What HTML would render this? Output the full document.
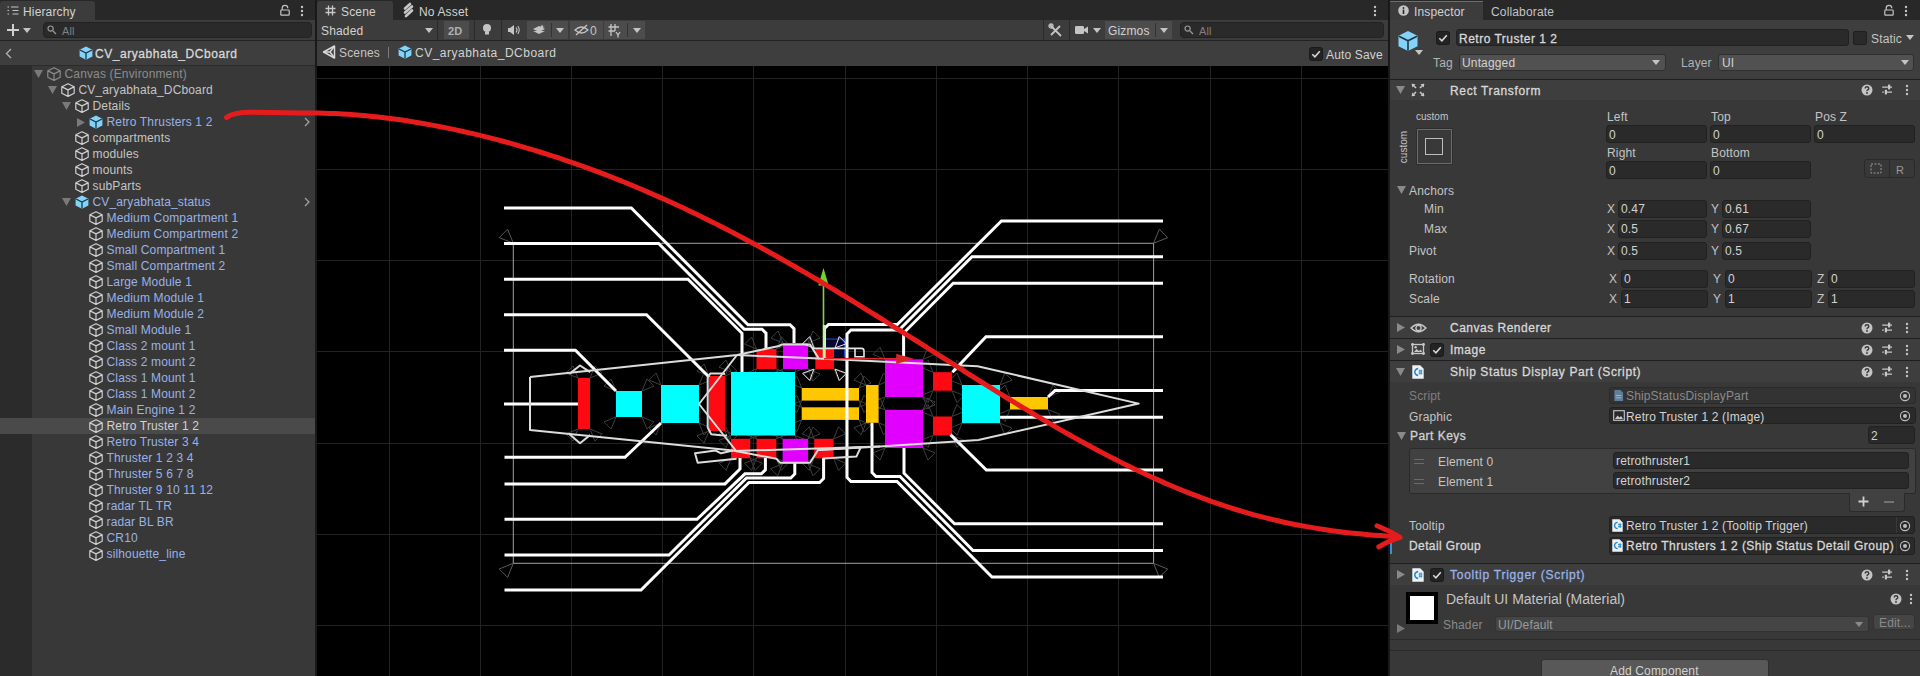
<!DOCTYPE html>
<html><head><meta charset="utf-8">
<style>
*{margin:0;padding:0;box-sizing:border-box}
html,body{width:1920px;height:676px;overflow:hidden;background:#191919;font-family:"Liberation Sans",sans-serif;font-size:12px;color:#d2d2d2}
.a{position:absolute;overflow:visible}
.t{position:absolute;white-space:pre;line-height:16px}
</style></head><body>
<svg width="0" height="0" style="position:absolute">
<defs>
<symbol id="cb" viewBox="0 0 14 14"><path d="M7 0.7 L13.2 3.8 V10.3 L7 13.4 L0.8 10.3 V3.8 Z M1 3.9 L7 6.9 L13 3.9 M7 6.9 V13.2" fill="none" stroke="#cfcfcf" stroke-width="1.2" stroke-linejoin="round"/></symbol>
<symbol id="cbb" viewBox="0 0 14 14"><path d="M7 0.6 L13.4 3.8 V10.6 L7 13.8 L0.6 10.6 V3.8 Z" fill="#83d2f7"/><path d="M1 4 L7 7 L13 4 M7 7 V13.6" stroke="#1d3644" stroke-width="1.3" fill="none"/></symbol>
<symbol id="kebab" viewBox="0 0 4 12"><circle cx="2" cy="2" r="1.2" fill="#c4c4c4"/><circle cx="2" cy="6" r="1.2" fill="#c4c4c4"/><circle cx="2" cy="10" r="1.2" fill="#c4c4c4"/></symbol>
<symbol id="help" viewBox="0 0 12 12"><circle cx="6" cy="6" r="5.5" fill="#c4c4c4"/><path d="M4.2 4.6 Q4.2 2.8 6 2.8 Q7.8 2.8 7.8 4.4 Q7.8 5.4 6.6 5.9 Q6 6.2 6 7.2" stroke="#383838" stroke-width="1.4" fill="none"/><circle cx="6" cy="9" r="0.9" fill="#383838"/></symbol>
<symbol id="sliders" viewBox="0 0 12 12"><path d="M1.2 3.2H11M1.2 8.2H2.8M5 8.2H11" stroke="#c8c8c8" stroke-width="1.3"/><rect x="7" y="0.6" width="2.2" height="4.8" fill="#c8c8c8"/><rect x="3.8" y="5.8" width="2.2" height="4.6" fill="#c8c8c8"/></symbol>
<symbol id="cs" viewBox="0 0 12 14"><path d="M0.3 0.3 H8.2 L11.7 3.8 V13.7 H0.3 Z" fill="#eef2f5"/><path d="M6.2 3.6 A3.4 3.4 0 1 0 6.2 10.4" stroke="#2a8bd0" stroke-width="1.6" fill="none"/><path d="M6.6 6H10.4M6.6 8.2H10.4M7.8 4.6V9.6M9.3 4.6V9.6" stroke="#2a8bd0" stroke-width="0.9"/></symbol>
<symbol id="target" viewBox="0 0 12 12"><circle cx="6" cy="6" r="4.6" fill="none" stroke="#bdbdbd" stroke-width="1.1"/><circle cx="6" cy="6" r="2" fill="#bdbdbd"/></symbol>
<symbol id="chk" viewBox="0 0 14 14"><rect x="0.5" y="0.5" width="13" height="13" rx="2" fill="#232323" stroke="#1a1a1a"/><path d="M3.3 7.2 L5.9 9.8 L10.8 4.2" stroke="#d8d8d8" stroke-width="1.6" fill="none"/></symbol>
<symbol id="scr" viewBox="0 0 12 14"><path d="M1.5 1 H8 L11 4 V13 H1.5 Z" fill="#5d7f99"/><path d="M3 7 H9 M3 9.5 H9" stroke="#9bc" stroke-width="1"/></symbol>
</defs></svg>
<div class="a" style="left:0px;top:0px;width:315px;height:676px;background:#383838;"></div>
<div class="a" style="left:0px;top:0px;width:315px;height:20px;background:#282828;"></div>
<div class="a" style="left:0px;top:1px;width:95px;height:19px;background:#3c3c3c;border-radius:3px 3px 0 0"></div>
<div class="a" style="left:0px;top:20px;width:315px;height:20px;background:#3c3c3c;"></div>
<div class="a" style="left:0px;top:40px;width:315px;height:1px;background:#232323;"></div>
<div class="a" style="left:0px;top:41px;width:315px;height:24px;background:#3e3e3e;"></div>
<div class="a" style="left:0px;top:65px;width:315px;height:1px;background:#2b2b2b;"></div>
<div class="a" style="left:0px;top:66px;width:32px;height:610px;background:#2b2b2b;"></div>
<div class="a" style="left:317px;top:0px;width:1071px;height:20px;background:#282828;"></div>
<div class="a" style="left:317px;top:1px;width:76px;height:19px;background:#3c3c3c;border-radius:3px 3px 0 0"></div>
<div class="a" style="left:317px;top:20px;width:1071px;height:20px;background:#3c3c3c;"></div>
<div class="a" style="left:317px;top:40px;width:1071px;height:1px;background:#232323;"></div>
<div class="a" style="left:317px;top:41px;width:1071px;height:25px;background:#3e3e3e;"></div>
<div class="a" style="left:317px;top:66px;width:1071px;height:610px;background:#000;"></div>
<div class="a" style="left:1390px;top:0px;width:530px;height:676px;background:#383838;"></div>
<div class="a" style="left:1390px;top:0px;width:530px;height:20px;background:#282828;"></div>
<div class="a" style="left:1390px;top:1px;width:93px;height:19px;background:#3c3c3c;border-radius:3px 3px 0 0"></div>
<div class="a" style="left:1390px;top:1px;width:93px;height:1px;background:#3a79bb;"></div>
<div class="a" style="left:1390px;top:20px;width:530px;height:59px;background:#3e3e3e;"></div>
<svg class="a" style="left:7px;top:6px;" width="12" height="10" viewBox="0 0 12 10"><path d="M0.5 1H2M0.5 4.5H2M0.5 8H2" stroke="#c4c4c4" stroke-width="1.2"/><path d="M4 1H11.5M5.5 4.5H11.5M5.5 8H11.5" stroke="#c4c4c4" stroke-width="1.2"/></svg>
<div class="t" style="left:23px;top:3.8px;color:#d2d2d2;font-size:12px;font-weight:400;letter-spacing:0.15px;">Hierarchy</div>
<svg class="a" style="left:280px;top:5px;" width="10" height="11" viewBox="0 0 10 11"><path d="M2.2 5 V3.2 A2.8 2.8 0 0 1 7.8 3.2" stroke="#c4c4c4" stroke-width="1.2" fill="none"/><rect x="0.8" y="5" width="8.4" height="5.2" rx="0.8" fill="none" stroke="#c4c4c4" stroke-width="1.2"/></svg>
<svg class="a" style="left:300px;top:5px" width="4" height="12"><use href="#kebab"/></svg>
<svg class="a" style="left:6px;top:23px;" width="14" height="14" viewBox="0 0 14 14"><path d="M7 1V13M1 7H13" stroke="#d0d0d0" stroke-width="2"/></svg>
<svg class="a" style="left:23px;top:28px;" width="8" height="5" viewBox="0 0 8 5"><path d="M0 0H8L4 5Z" fill="#c4c4c4"/></svg>
<div class="a" style="left:43px;top:22px;width:269px;height:16px;background:#2a2a2a;border:1px solid #222;border-radius:4px"></div>
<svg class="a" style="left:47px;top:25px;" width="11" height="10" viewBox="0 0 11 10"><circle cx="3.6" cy="3.6" r="2.6" fill="none" stroke="#9a9a9a" stroke-width="1.2"/><path d="M5.4 5.4L9 9" stroke="#9a9a9a" stroke-width="1.3"/></svg>
<div class="t" style="left:62px;top:22.8px;color:#808080;font-size:11px;font-weight:400;letter-spacing:0.15px;">All</div>
<svg class="a" style="left:5px;top:48px;" width="7" height="11" viewBox="0 0 7 11"><path d="M6 1L1.5 5.5L6 10" stroke="#b0b0b0" stroke-width="1.4" fill="none"/></svg>
<svg class="a" style="left:79px;top:46px" width="14" height="14"><use href="#cbb"/></svg>
<div class="t" style="left:95px;top:45.8px;color:#d8d8d8;font-size:12px;font-weight:400;letter-spacing:0.55px;-webkit-text-stroke:0.3px #d8d8d8;">CV_aryabhata_DCboard</div>
<svg class="a" style="left:34px;top:70px;" width="9" height="8" viewBox="0 0 9 8"><path d="M0 0H9L4.5 8Z" fill="#7a7a7a"/></svg>
<svg class="a" style="left:47px;top:67px;" width="14" height="14" viewBox="0 0 14 14"><path d="M7 0.7 L13.2 3.8 V10.3 L7 13.4 L0.8 10.3 V3.8 Z M1 3.9 L7 6.9 L13 3.9 M7 6.9 V13.2" fill="none" stroke="#8a8a8a" stroke-width="1.2" stroke-linejoin="round"/></svg>
<div class="t" style="left:64.5px;top:66.0px;color:#8c8c8c;font-size:12px;font-weight:400;letter-spacing:0.15px;">Canvas (Environment)</div>
<svg class="a" style="left:48px;top:86px;" width="9" height="8" viewBox="0 0 9 8"><path d="M0 0H9L4.5 8Z" fill="#7a7a7a"/></svg>
<svg class="a" style="left:61px;top:83px" width="14" height="14"><use href="#cb"/></svg>
<div class="t" style="left:78.5px;top:82.0px;color:#c4c4c4;font-size:12px;font-weight:400;letter-spacing:0.15px;">CV_aryabhata_DCboard</div>
<svg class="a" style="left:62px;top:102px;" width="9" height="8" viewBox="0 0 9 8"><path d="M0 0H9L4.5 8Z" fill="#7a7a7a"/></svg>
<svg class="a" style="left:75px;top:99px" width="14" height="14"><use href="#cb"/></svg>
<div class="t" style="left:92.5px;top:98.0px;color:#c4c4c4;font-size:12px;font-weight:400;letter-spacing:0.15px;">Details</div>
<svg class="a" style="left:77px;top:117.5px;" width="8" height="9" viewBox="0 0 8 9"><path d="M0 0V9L8 4.5Z" fill="#7a7a7a"/></svg>
<svg class="a" style="left:89px;top:115px" width="14" height="14"><use href="#cbb"/></svg>
<div class="t" style="left:106.5px;top:114.0px;color:#98b2e8;font-size:12px;font-weight:400;letter-spacing:0.15px;">Retro Thrusters 1 2</div>
<svg class="a" style="left:304px;top:117px;" width="6" height="10" viewBox="0 0 6 10"><path d="M1 1L5 5L1 9" stroke="#a0a0a0" stroke-width="1.3" fill="none"/></svg>
<svg class="a" style="left:75px;top:131px" width="14" height="14"><use href="#cb"/></svg>
<div class="t" style="left:92.5px;top:130.0px;color:#c4c4c4;font-size:12px;font-weight:400;letter-spacing:0.15px;">compartments</div>
<svg class="a" style="left:75px;top:147px" width="14" height="14"><use href="#cb"/></svg>
<div class="t" style="left:92.5px;top:146.0px;color:#c4c4c4;font-size:12px;font-weight:400;letter-spacing:0.15px;">modules</div>
<svg class="a" style="left:75px;top:163px" width="14" height="14"><use href="#cb"/></svg>
<div class="t" style="left:92.5px;top:162.0px;color:#c4c4c4;font-size:12px;font-weight:400;letter-spacing:0.15px;">mounts</div>
<svg class="a" style="left:75px;top:179px" width="14" height="14"><use href="#cb"/></svg>
<div class="t" style="left:92.5px;top:178.0px;color:#c4c4c4;font-size:12px;font-weight:400;letter-spacing:0.15px;">subParts</div>
<svg class="a" style="left:62px;top:198px;" width="9" height="8" viewBox="0 0 9 8"><path d="M0 0H9L4.5 8Z" fill="#7a7a7a"/></svg>
<svg class="a" style="left:75px;top:195px" width="14" height="14"><use href="#cbb"/></svg>
<div class="t" style="left:92.5px;top:194.0px;color:#98b2e8;font-size:12px;font-weight:400;letter-spacing:0.15px;">CV_aryabhata_status</div>
<svg class="a" style="left:304px;top:197px;" width="6" height="10" viewBox="0 0 6 10"><path d="M1 1L5 5L1 9" stroke="#a0a0a0" stroke-width="1.3" fill="none"/></svg>
<svg class="a" style="left:89px;top:211px" width="14" height="14"><use href="#cb"/></svg>
<div class="t" style="left:106.5px;top:210.0px;color:#98b2e8;font-size:12px;font-weight:400;letter-spacing:0.15px;">Medium Compartment 1</div>
<svg class="a" style="left:89px;top:227px" width="14" height="14"><use href="#cb"/></svg>
<div class="t" style="left:106.5px;top:226.0px;color:#98b2e8;font-size:12px;font-weight:400;letter-spacing:0.15px;">Medium Compartment 2</div>
<svg class="a" style="left:89px;top:243px" width="14" height="14"><use href="#cb"/></svg>
<div class="t" style="left:106.5px;top:242.0px;color:#98b2e8;font-size:12px;font-weight:400;letter-spacing:0.15px;">Small Compartment 1</div>
<svg class="a" style="left:89px;top:259px" width="14" height="14"><use href="#cb"/></svg>
<div class="t" style="left:106.5px;top:258.0px;color:#98b2e8;font-size:12px;font-weight:400;letter-spacing:0.15px;">Small Compartment 2</div>
<svg class="a" style="left:89px;top:275px" width="14" height="14"><use href="#cb"/></svg>
<div class="t" style="left:106.5px;top:274.0px;color:#98b2e8;font-size:12px;font-weight:400;letter-spacing:0.15px;">Large Module 1</div>
<svg class="a" style="left:89px;top:291px" width="14" height="14"><use href="#cb"/></svg>
<div class="t" style="left:106.5px;top:290.0px;color:#98b2e8;font-size:12px;font-weight:400;letter-spacing:0.15px;">Medium Module 1</div>
<svg class="a" style="left:89px;top:307px" width="14" height="14"><use href="#cb"/></svg>
<div class="t" style="left:106.5px;top:306.0px;color:#98b2e8;font-size:12px;font-weight:400;letter-spacing:0.15px;">Medium Module 2</div>
<svg class="a" style="left:89px;top:323px" width="14" height="14"><use href="#cb"/></svg>
<div class="t" style="left:106.5px;top:322.0px;color:#98b2e8;font-size:12px;font-weight:400;letter-spacing:0.15px;">Small Module 1</div>
<svg class="a" style="left:89px;top:339px" width="14" height="14"><use href="#cb"/></svg>
<div class="t" style="left:106.5px;top:338.0px;color:#98b2e8;font-size:12px;font-weight:400;letter-spacing:0.15px;">Class 2 mount 1</div>
<svg class="a" style="left:89px;top:355px" width="14" height="14"><use href="#cb"/></svg>
<div class="t" style="left:106.5px;top:354.0px;color:#98b2e8;font-size:12px;font-weight:400;letter-spacing:0.15px;">Class 2 mount 2</div>
<svg class="a" style="left:89px;top:371px" width="14" height="14"><use href="#cb"/></svg>
<div class="t" style="left:106.5px;top:370.0px;color:#98b2e8;font-size:12px;font-weight:400;letter-spacing:0.15px;">Class 1 Mount 1</div>
<svg class="a" style="left:89px;top:387px" width="14" height="14"><use href="#cb"/></svg>
<div class="t" style="left:106.5px;top:386.0px;color:#98b2e8;font-size:12px;font-weight:400;letter-spacing:0.15px;">Class 1 Mount 2</div>
<svg class="a" style="left:89px;top:403px" width="14" height="14"><use href="#cb"/></svg>
<div class="t" style="left:106.5px;top:402.0px;color:#98b2e8;font-size:12px;font-weight:400;letter-spacing:0.15px;">Main Engine 1 2</div>
<div class="a" style="left:0px;top:418px;width:315px;height:16px;background:#4a4a4a;"></div>
<svg class="a" style="left:89px;top:419px" width="14" height="14"><use href="#cb"/></svg>
<div class="t" style="left:106.5px;top:418.0px;color:#d2d2d2;font-size:12px;font-weight:400;letter-spacing:0.15px;">Retro Truster 1 2</div>
<svg class="a" style="left:89px;top:435px" width="14" height="14"><use href="#cb"/></svg>
<div class="t" style="left:106.5px;top:434.0px;color:#98b2e8;font-size:12px;font-weight:400;letter-spacing:0.15px;">Retro Truster 3 4</div>
<svg class="a" style="left:89px;top:451px" width="14" height="14"><use href="#cb"/></svg>
<div class="t" style="left:106.5px;top:450.0px;color:#98b2e8;font-size:12px;font-weight:400;letter-spacing:0.15px;">Thruster 1 2 3 4</div>
<svg class="a" style="left:89px;top:467px" width="14" height="14"><use href="#cb"/></svg>
<div class="t" style="left:106.5px;top:466.0px;color:#98b2e8;font-size:12px;font-weight:400;letter-spacing:0.15px;">Thruster 5 6 7 8</div>
<svg class="a" style="left:89px;top:483px" width="14" height="14"><use href="#cb"/></svg>
<div class="t" style="left:106.5px;top:482.0px;color:#98b2e8;font-size:12px;font-weight:400;letter-spacing:0.15px;">Thruster 9 10 11 12</div>
<svg class="a" style="left:89px;top:499px" width="14" height="14"><use href="#cb"/></svg>
<div class="t" style="left:106.5px;top:498.0px;color:#98b2e8;font-size:12px;font-weight:400;letter-spacing:0.15px;">radar TL TR</div>
<svg class="a" style="left:89px;top:515px" width="14" height="14"><use href="#cb"/></svg>
<div class="t" style="left:106.5px;top:514.0px;color:#98b2e8;font-size:12px;font-weight:400;letter-spacing:0.15px;">radar BL BR</div>
<svg class="a" style="left:89px;top:531px" width="14" height="14"><use href="#cb"/></svg>
<div class="t" style="left:106.5px;top:530.0px;color:#98b2e8;font-size:12px;font-weight:400;letter-spacing:0.15px;">CR10</div>
<svg class="a" style="left:89px;top:547px" width="14" height="14"><use href="#cb"/></svg>
<div class="t" style="left:106.5px;top:546.0px;color:#98b2e8;font-size:12px;font-weight:400;letter-spacing:0.15px;">silhouette_line</div>
<svg class="a" style="left:0;top:0" width="1920" height="676" viewBox="0 0 1920 676"><defs><clipPath id="vp"><rect x="317" y="66" width="1071" height="610"/></clipPath></defs><g clip-path="url(#vp)"><rect x="389" y="66" width="1" height="610" fill="#222222"/><rect x="480" y="66" width="1" height="610" fill="#222222"/><rect x="571" y="66" width="1" height="610" fill="#222222"/><rect x="662" y="66" width="1" height="610" fill="#222222"/><rect x="753" y="66" width="1" height="610" fill="#222222"/><rect x="845" y="66" width="1" height="610" fill="#222222"/><rect x="936" y="66" width="1" height="610" fill="#222222"/><rect x="1027" y="66" width="1" height="610" fill="#222222"/><rect x="1118" y="66" width="1" height="610" fill="#222222"/><rect x="1210" y="66" width="1" height="610" fill="#222222"/><rect x="1301" y="66" width="1" height="610" fill="#222222"/><rect x="317" y="78" width="1071" height="1" fill="#222222"/><rect x="317" y="169" width="1071" height="1" fill="#222222"/><rect x="317" y="260" width="1071" height="1" fill="#222222"/><rect x="317" y="351" width="1071" height="1" fill="#222222"/><rect x="317" y="443" width="1071" height="1" fill="#222222"/><rect x="317" y="534" width="1071" height="1" fill="#222222"/><rect x="317" y="625" width="1071" height="1" fill="#222222"/><rect x="513.3" y="243.3" width="640.3" height="320" fill="none" stroke="#bdbdbd" stroke-width="1" opacity="0.85"/><path d="M513.3,243.3 L507.6,229.2 L499.2,237.6 Z M1153.6,243.3 L1167.7,237.6 L1159.3,229.2 Z M513.3,563.3 L499.2,569.0 L507.6,577.4 Z M1153.6,563.3 L1159.3,577.4 L1167.7,569.0 Z" fill="none" stroke="#5a5a5a" stroke-width="1"/><path d="M578.0,378.0 L573.1,366.0 L566.0,373.1 Z M590.0,378.0 L602.0,373.1 L594.9,366.0 Z M578.0,429.0 L566.0,433.9 L573.1,441.0 Z M590.0,429.0 L594.9,441.0 L602.0,433.9 Z M616.0,391.0 L611.1,379.0 L604.0,386.1 Z M642.0,391.0 L654.0,386.1 L646.9,379.0 Z M616.0,417.0 L604.0,421.9 L611.1,429.0 Z M642.0,417.0 L646.9,429.0 L654.0,421.9 Z M661.0,385.0 L656.1,373.0 L649.0,380.1 Z M699.0,385.0 L711.0,380.1 L703.9,373.0 Z M661.0,423.0 L649.0,427.9 L656.1,435.0 Z M699.0,423.0 L703.9,435.0 L711.0,427.9 Z M709.0,376.0 L704.1,364.0 L697.0,371.1 Z M725.0,376.0 L737.0,371.1 L729.9,364.0 Z M709.0,431.0 L697.0,435.9 L704.1,443.0 Z M725.0,431.0 L729.9,443.0 L737.0,435.9 Z M731.0,372.0 L726.1,360.0 L719.0,367.1 Z M795.0,372.0 L807.0,367.1 L799.9,360.0 Z M731.0,435.5 L719.0,440.4 L726.1,447.5 Z M795.0,435.5 L799.9,447.5 L807.0,440.4 Z M756.5,349.0 L751.6,337.0 L744.5,344.1 Z M776.5,349.0 L788.5,344.1 L781.4,337.0 Z M756.5,369.0 L744.5,373.9 L751.6,381.0 Z M776.5,369.0 L781.4,381.0 L788.5,373.9 Z M783.0,343.0 L778.1,331.0 L771.0,338.1 Z M808.0,343.0 L820.0,338.1 L812.9,331.0 Z M783.0,369.0 L771.0,373.9 L778.1,381.0 Z M808.0,369.0 L812.9,381.0 L820.0,373.9 Z M815.4,349.0 L810.5,337.0 L803.4,344.1 Z M834.0,349.0 L846.0,344.1 L838.9,337.0 Z M815.4,369.0 L803.4,373.9 L810.5,381.0 Z M834.0,369.0 L838.9,381.0 L846.0,373.9 Z M731.0,438.8 L726.1,426.8 L719.0,433.9 Z M750.2,438.8 L762.2,433.9 L755.1,426.8 Z M731.0,458.3 L719.0,463.2 L726.1,470.3 Z M750.2,458.3 L755.1,470.3 L762.2,463.2 Z M756.5,438.8 L751.6,426.8 L744.5,433.9 Z M776.3,438.8 L788.3,433.9 L781.2,426.8 Z M756.5,458.3 L744.5,463.2 L751.6,470.3 Z M776.3,458.3 L781.2,470.3 L788.3,463.2 Z M782.6,438.8 L777.7,426.8 L770.6,433.9 Z M808.1,438.8 L820.1,433.9 L813.0,426.8 Z M782.6,463.8 L770.6,468.7 L777.7,475.8 Z M808.1,463.8 L813.0,475.8 L820.1,468.7 Z M814.2,438.8 L809.3,426.8 L802.2,433.9 Z M833.6,438.8 L845.6,433.9 L838.5,426.8 Z M814.2,458.3 L802.2,463.2 L809.3,470.3 Z M833.6,458.3 L838.5,470.3 L845.6,463.2 Z M801.7,388.0 L796.8,376.0 L789.7,383.1 Z M859.0,388.0 L871.0,383.1 L863.9,376.0 Z M801.7,400.6 L789.7,405.5 L796.8,412.6 Z M859.0,400.6 L863.9,412.6 L871.0,405.5 Z M801.7,407.3 L796.8,395.3 L789.7,402.4 Z M859.0,407.3 L871.0,402.4 L863.9,395.3 Z M801.7,419.9 L789.7,424.8 L796.8,431.9 Z M859.0,419.9 L863.9,431.9 L871.0,424.8 Z M866.0,385.0 L861.1,373.0 L854.0,380.1 Z M878.6,385.0 L890.6,380.1 L883.5,373.0 Z M866.0,422.8 L854.0,427.7 L861.1,434.8 Z M878.6,422.8 L883.5,434.8 L890.6,427.7 Z M885.0,359.3 L880.1,347.3 L873.0,354.4 Z M923.0,359.3 L935.0,354.4 L927.9,347.3 Z M885.0,397.0 L873.0,401.9 L880.1,409.0 Z M923.0,397.0 L927.9,409.0 L935.0,401.9 Z M885.0,409.9 L880.1,397.9 L873.0,405.0 Z M923.0,409.9 L935.0,405.0 L927.9,397.9 Z M885.0,448.0 L873.0,452.9 L880.1,460.0 Z M923.0,448.0 L927.9,460.0 L935.0,452.9 Z M933.0,372.2 L928.1,360.2 L921.0,367.3 Z M952.0,372.2 L964.0,367.3 L956.9,360.2 Z M933.0,390.7 L921.0,395.6 L928.1,402.7 Z M952.0,390.7 L956.9,402.7 L964.0,395.6 Z M933.0,416.5 L928.1,404.5 L921.0,411.6 Z M952.0,416.5 L964.0,411.6 L956.9,404.5 Z M933.0,435.4 L921.0,440.3 L928.1,447.4 Z M952.0,435.4 L956.9,447.4 L964.0,440.3 Z M962.0,385.0 L957.1,373.0 L950.0,380.1 Z M1000.0,385.0 L1012.0,380.1 L1004.9,373.0 Z M962.0,423.2 L950.0,428.1 L957.1,435.2 Z M1000.0,423.2 L1004.9,435.2 L1012.0,428.1 Z M1010.0,397.0 L1005.1,385.0 L998.0,392.1 Z M1048.0,397.0 L1060.0,392.1 L1052.9,385.0 Z M1010.0,409.5 L998.0,414.4 L1005.1,421.5 Z M1048.0,409.5 L1052.9,421.5 L1060.0,414.4 Z" fill="none" stroke="#3e3e3e" stroke-width="1"/><rect x="825.5" y="338.6" width="19.1" height="18.7" fill="#040430"/><path d="M825.5,339 H844.6 V357.3" fill="none" stroke="#2f48b8" stroke-width="1.2"/><rect x="578" y="378" width="12" height="51" fill="#ff0a12"/><rect x="616" y="391" width="26" height="26" fill="#00ffff"/><rect x="661" y="385" width="38" height="38" fill="#00ffff"/><rect x="709" y="376" width="16" height="55" fill="#ff0a12"/><rect x="731" y="372" width="64" height="63.5" fill="#00ffff"/><rect x="756.5" y="349" width="20" height="20" fill="#ff0a12"/><rect x="783" y="343" width="25" height="26" fill="#e100ff"/><rect x="815.4" y="349" width="18.6" height="20" fill="#ff0a12"/><rect x="731" y="438.8" width="19.2" height="19.5" fill="#ff0a12"/><rect x="756.5" y="438.8" width="19.8" height="19.5" fill="#ff0a12"/><rect x="782.6" y="438.8" width="25.5" height="25" fill="#e100ff"/><rect x="814.2" y="438.8" width="19.4" height="19.5" fill="#ff0a12"/><rect x="801.7" y="388" width="57.3" height="12.6" fill="#ffc700"/><rect x="801.7" y="407.3" width="57.3" height="12.6" fill="#ffc700"/><rect x="866" y="385" width="12.6" height="37.8" fill="#ffc700"/><rect x="885" y="359.3" width="38" height="37.7" fill="#e100ff"/><rect x="885" y="409.9" width="38" height="38.1" fill="#e100ff"/><rect x="933" y="372.2" width="19" height="18.5" fill="#ff0a12"/><rect x="933" y="416.5" width="19" height="18.9" fill="#ff0a12"/><rect x="962" y="385" width="38" height="38.2" fill="#00ffff"/><rect x="1010" y="397" width="38" height="12.5" fill="#ffc700"/><path d="M504,208 L631.3,208 L748,324.7 L790,324.7 L794,328.7 L794,343" fill="none" stroke="#fff" stroke-width="3" stroke-linejoin="miter" stroke-linecap="butt" /><path d="M504,243.5 L658.6,243.5 L744.3,329.2 L762,329.2 L766,333.2 L766,349" fill="none" stroke="#fff" stroke-width="3" stroke-linejoin="miter" stroke-linecap="butt" /><path d="M504,279.3 L688,279.3 L742,333.3 L742,372" fill="none" stroke="#fff" stroke-width="3" stroke-linejoin="miter" stroke-linecap="butt" /><path d="M504,314.7 L646.5,314.7 L709,377" fill="none" stroke="#fff" stroke-width="3" stroke-linejoin="miter" stroke-linecap="butt" /><path d="M504,350.3 L575.4,350.3 L616,391" fill="none" stroke="#fff" stroke-width="3" stroke-linejoin="miter" stroke-linecap="butt" /><path d="M504,404 L578,404" fill="none" stroke="#fff" stroke-width="3" stroke-linejoin="miter" stroke-linecap="butt" /><path d="M504.5,457.3 L625,457.3 L661,423" fill="none" stroke="#fff" stroke-width="3" stroke-linejoin="miter" stroke-linecap="butt" /><path d="M504.5,483.9 L725,483.9 L740,469 L740,458" fill="none" stroke="#fff" stroke-width="3" stroke-linejoin="miter" stroke-linecap="butt" /><path d="M504.5,519.3 L697,519.3 L745,473.8 L761.4,473.8 L765.4,469.8 L765.4,458" fill="none" stroke="#fff" stroke-width="3" stroke-linejoin="miter" stroke-linecap="butt" /><path d="M504.5,555 L669,555 L746.5,478 L790.8,478 L794.8,474 L794.8,463" fill="none" stroke="#fff" stroke-width="3" stroke-linejoin="miter" stroke-linecap="butt" /><path d="M504.5,590 L641,590 L749,482.5 L819.6,482.5 L823.6,478.5 L823.6,458" fill="none" stroke="#fff" stroke-width="3" stroke-linejoin="miter" stroke-linecap="butt" /><path d="M1163,221 L1001.4,221 L897.3,324.5 L828.5,324.5 L824.5,328.5 L824.5,349" fill="none" stroke="#fff" stroke-width="3" stroke-linejoin="miter" stroke-linecap="butt" /><path d="M1163,256.8 L972,256.8 L899,330 L851,330 L847,334 L847,477.5 L851,481.5 L897,481.5 L992,577 L1163,577" fill="none" stroke="#fff" stroke-width="3" stroke-linejoin="miter" stroke-linecap="butt" /><path d="M1163,283.2 L953.2,283.2 L903.6,333 L903.6,359.5" fill="none" stroke="#fff" stroke-width="3" stroke-linejoin="miter" stroke-linecap="butt" /><path d="M1163,336.7 L986,336.7 L952.4,372.2" fill="none" stroke="#fff" stroke-width="3" stroke-linejoin="miter" stroke-linecap="butt" /><path d="M1163,390.6 L1055,390.6 L1048,397" fill="none" stroke="#fff" stroke-width="3" stroke-linejoin="miter" stroke-linecap="butt" /><path d="M1163,417.2 L1000,417.2" fill="none" stroke="#fff" stroke-width="3" stroke-linejoin="miter" stroke-linecap="butt" /><path d="M950.5,434.6 L986.4,470 L1163,470" fill="none" stroke="#fff" stroke-width="3" stroke-linejoin="miter" stroke-linecap="butt" /><path d="M872,422.8 L872,472.5 L876,476.5 L900,476.5 L973,550.5 L1163,550.5" fill="none" stroke="#fff" stroke-width="3" stroke-linejoin="miter" stroke-linecap="butt" /><path d="M904,448 L904,473.2 L954.5,523.8 L1163,523.8" fill="none" stroke="#fff" stroke-width="3" stroke-linejoin="miter" stroke-linecap="butt" /><path d="M530,377 L737,355 L779,346 L782,344.4 L810,344.4 L818.7,358.5 L977.6,366.2 L1138.7,403.6 L978.4,440 L880,446.6 L818,450 L810,462.7 L780,462.7 L776.5,458.8 L733,450.5 L530,430 L530,377" fill="none" stroke="#dcdcdc" stroke-width="2" stroke-linejoin="round" stroke-linecap="butt" /><path d="M737,355 L699,404 L737,452" fill="none" stroke="#dcdcdc" stroke-width="2" stroke-linejoin="round" stroke-linecap="butt" /><path d="M737,355 L818.7,358.5" fill="none" stroke="#dcdcdc" stroke-width="2" stroke-linejoin="round" stroke-linecap="butt" /><path d="M735,451 L880,446.6" fill="none" stroke="#dcdcdc" stroke-width="2" stroke-linejoin="round" stroke-linecap="butt" /><path d="M725,374 L721.7,373.6 L710.2,373.6 L707.7,377.5 L707.7,427.5 L711.2,434.2 L720.8,435.2 L727,435.5" fill="none" stroke="#dcdcdc" stroke-width="2" stroke-linejoin="round" stroke-linecap="butt" /><path d="M569.5,373.7 L580,365.5 L590.2,372.2" fill="none" stroke="#dcdcdc" stroke-width="2" stroke-linejoin="round" stroke-linecap="butt" /><path d="M569.5,434.3 L580,443.2 L590.2,435" fill="none" stroke="#dcdcdc" stroke-width="2" stroke-linejoin="round" stroke-linecap="butt" /><path d="M733,450.5 L721,453.3 L715.5,450.5 L695,453.3 L697.7,462.7 L736.6,458.8" fill="none" stroke="#dcdcdc" stroke-width="2" stroke-linejoin="round" stroke-linecap="butt" /><path d="M818,450 L860.8,447.2 L856.4,456.6 L823,458.5" fill="none" stroke="#dcdcdc" stroke-width="2" stroke-linejoin="round" stroke-linecap="butt" /><path d="M813,348.4 H861.5 Q864,348.4 864,351 V356.8 H855 V349" fill="none" stroke="#e6e6e6" stroke-width="1.6"/><path d="M813.9,347.9 L809.7,336.6 L802.6,343.7 Z M835.1,347.9 L846.4,343.7 L839.3,336.6 Z M813.9,369.1 L802.6,373.3 L809.7,380.4 Z M835.1,369.1 L839.3,380.4 L846.4,373.3 Z" fill="none" stroke="#e8e8e8" stroke-width="1"/><path d="M823.5,325 V285" stroke="#84d24a" stroke-width="1.6"/><path d="M824.2,358 V325" stroke="#c6eeb0" stroke-width="3"/><path d="M818.3,285.5 L828.7,285.5 L823.5,268 Z" fill="#6fd42a"/><path d="M824,358.8 H897" stroke="#d62a2a" stroke-width="1.6"/><path d="M896.2,353.7 L896.2,364 L914,358.8 Z" fill="#d62424"/></g></svg>
<svg class="a" style="left:325px;top:5px;" width="11" height="11" viewBox="0 0 11 11"><path d="M3.5 0.5V10.5M7.5 0.5V10.5M0.5 3.5H10.5M0.5 7.5H10.5" stroke="#c8c8c8" stroke-width="1.3"/></svg>
<div class="t" style="left:341px;top:3.8px;color:#d2d2d2;font-size:12px;font-weight:400;letter-spacing:0.15px;">Scene</div>
<svg class="a" style="left:403px;top:3px;" width="11" height="15" viewBox="0 0 11 15"><path d="M2 5.5 L7 1 M2 9.5 L9 3.5 M3 13 L9 7.5" stroke="#c8c8c8" stroke-width="2.6" stroke-linecap="round"/></svg>
<div class="t" style="left:419px;top:3.8px;color:#d2d2d2;font-size:12px;font-weight:400;letter-spacing:0.15px;">No Asset</div>
<svg class="a" style="left:1373px;top:5px" width="4" height="12"><use href="#kebab"/></svg>
<div class="t" style="left:321px;top:22.8px;color:#d2d2d2;font-size:12px;font-weight:400;letter-spacing:0.15px;">Shaded</div>
<svg class="a" style="left:425px;top:28px;" width="8" height="5" viewBox="0 0 8 5"><path d="M0 0H8L4 5Z" fill="#c4c4c4"/></svg>
<div class="a" style="left:437px;top:20px;width:1px;height:20px;background:#2a2a2a;"></div>
<div class="a" style="left:444px;top:21px;width:25px;height:18px;background:#4c4c4c;"></div>
<div class="t" style="left:448px;top:22.8px;color:#b0b0b0;font-size:11px;font-weight:700;letter-spacing:0.15px;">2D</div>
<div class="a" style="left:474px;top:20px;width:1px;height:20px;background:#2a2a2a;"></div>
<svg class="a" style="left:482px;top:23px;" width="10" height="14" viewBox="0 0 10 14"><circle cx="5" cy="5" r="4" fill="#c4c4c4"/><rect x="3" y="8.5" width="4" height="3" fill="#c4c4c4"/></svg>
<div class="a" style="left:501px;top:20px;width:1px;height:20px;background:#2a2a2a;"></div>
<svg class="a" style="left:507px;top:24px;" width="14" height="12" viewBox="0 0 14 12"><path d="M1 4H3L7 1V11L3 8H1Z" fill="#c4c4c4"/><path d="M9 3.5Q11 6 9 8.5M10.8 2Q13.6 6 10.8 10" stroke="#c4c4c4" stroke-width="1.1" fill="none"/></svg>
<div class="a" style="left:527px;top:21px;width:41px;height:18px;background:#4c4c4c;"></div>
<svg class="a" style="left:532px;top:24px;" width="14" height="12" viewBox="0 0 14 12"><path d="M1 7L7 10L13 7M1 5L7 8L13 5L7 2Z" fill="#c4c4c4"/><path d="M10 0.5L11 2.5L13 3L11 3.5L10 5.5L9 3.5L7 3L9 2.5Z" fill="#c4c4c4"/></svg>
<div class="a" style="left:551px;top:23px;width:1px;height:14px;background:#333;"></div>
<svg class="a" style="left:556px;top:28px;" width="8" height="5" viewBox="0 0 8 5"><path d="M0 0H8L4 5Z" fill="#c4c4c4"/></svg>
<div class="a" style="left:570px;top:21px;width:33px;height:18px;background:#4c4c4c;"></div>
<svg class="a" style="left:574px;top:24px;" width="15" height="12" viewBox="0 0 15 12"><path d="M1 6Q7.5 0 14 6Q7.5 12 1 6Z" fill="none" stroke="#c4c4c4" stroke-width="1.2"/><path d="M2 11L13 1" stroke="#c4c4c4" stroke-width="1.3"/></svg>
<div class="t" style="left:590px;top:22.8px;color:#c4c4c4;font-size:12px;font-weight:400;letter-spacing:0.15px;">0</div>
<div class="a" style="left:604px;top:21px;width:41px;height:18px;background:#4c4c4c;"></div>
<svg class="a" style="left:608px;top:23px;" width="14" height="15" viewBox="0 0 14 15"><path d="M3 1V13M7 1V8M0.5 4H11M0.5 8H7" stroke="#c4c4c4" stroke-width="1.3"/><path d="M8 9L10 12V14.5M12 9L10 12" stroke="#c4c4c4" stroke-width="1.3" fill="none"/></svg>
<div class="a" style="left:627px;top:23px;width:1px;height:14px;background:#333;"></div>
<svg class="a" style="left:633px;top:28px;" width="8" height="5" viewBox="0 0 8 5"><path d="M0 0H8L4 5Z" fill="#c4c4c4"/></svg>
<div class="a" style="left:1043px;top:20px;width:1px;height:20px;background:#2a2a2a;"></div>
<svg class="a" style="left:1048px;top:23px;" width="15" height="14" viewBox="0 0 15 14"><path d="M2 2L13 13M3 12L12 3" stroke="#c4c4c4" stroke-width="1.8"/><circle cx="3" cy="3" r="2" fill="none" stroke="#c4c4c4" stroke-width="1.3"/></svg>
<div class="a" style="left:1069px;top:20px;width:1px;height:20px;background:#2a2a2a;"></div>
<svg class="a" style="left:1075px;top:25px;" width="14" height="10" viewBox="0 0 14 10"><rect x="0" y="1" width="9" height="8" rx="1.2" fill="#c4c4c4"/><path d="M9 4L13 1.5V8.5L9 6Z" fill="#c4c4c4"/></svg>
<svg class="a" style="left:1093px;top:28px;" width="8" height="5" viewBox="0 0 8 5"><path d="M0 0H8L4 5Z" fill="#c4c4c4"/></svg>
<div class="a" style="left:1105px;top:21px;width:67px;height:18px;background:#4c4c4c;"></div>
<div class="t" style="left:1108px;top:22.8px;color:#d2d2d2;font-size:12px;font-weight:400;letter-spacing:0.15px;">Gizmos</div>
<div class="a" style="left:1155px;top:23px;width:1px;height:14px;background:#333;"></div>
<svg class="a" style="left:1160px;top:28px;" width="8" height="5" viewBox="0 0 8 5"><path d="M0 0H8L4 5Z" fill="#c4c4c4"/></svg>
<div class="a" style="left:1180px;top:22px;width:204px;height:16px;background:#2a2a2a;border:1px solid #222;border-radius:4px"></div>
<svg class="a" style="left:1184px;top:25px;" width="11" height="10" viewBox="0 0 11 10"><circle cx="3.6" cy="3.6" r="2.6" fill="none" stroke="#9a9a9a" stroke-width="1.2"/><path d="M5.4 5.4L9 9" stroke="#9a9a9a" stroke-width="1.3"/></svg>
<div class="t" style="left:1199px;top:22.8px;color:#808080;font-size:11px;font-weight:400;letter-spacing:0.15px;">All</div>
<svg class="a" style="left:322px;top:45px;" width="14" height="14" viewBox="0 0 14 14"><path d="M1.5 7 L12.5 1 L12.5 13 Z" fill="none" stroke="#d8d8d8" stroke-width="1.5" stroke-linejoin="round"/><path d="M1.5 7 H8 M12.5 1 L8 7 L12.5 13" stroke="#d8d8d8" stroke-width="1.5" fill="none"/></svg>
<div class="t" style="left:339px;top:44.8px;color:#c4c4c4;font-size:12px;font-weight:400;letter-spacing:0.15px;">Scenes</div>
<div class="a" style="left:388px;top:47px;width:1px;height:11px;background:#7a7a7a;"></div>
<svg class="a" style="left:398px;top:45px" width="14" height="14"><use href="#cbb"/></svg>
<div class="t" style="left:415px;top:44.8px;color:#d2d2d2;font-size:12px;font-weight:400;letter-spacing:0.5px;">CV_aryabhata_DCboard</div>
<svg class="a" style="left:1309px;top:47px;" width="14" height="14" viewBox="0 0 14 14"><use href="#chk"/></svg>
<div class="t" style="left:1326px;top:46.8px;color:#d2d2d2;font-size:12px;font-weight:400;letter-spacing:0.15px;">Auto Save</div>
<svg class="a" style="left:1398px;top:5px;" width="11" height="11" viewBox="0 0 11 11"><circle cx="5.5" cy="5.5" r="5.3" fill="#c4c4c4"/><rect x="4.7" y="4.6" width="1.6" height="4.4" fill="#282828"/><circle cx="5.5" cy="3" r="0.9" fill="#282828"/></svg>
<div class="t" style="left:1414px;top:3.8px;color:#d2d2d2;font-size:12px;font-weight:400;letter-spacing:0.15px;">Inspector</div>
<div class="t" style="left:1491px;top:3.8px;color:#c4c4c4;font-size:12px;font-weight:400;letter-spacing:0.15px;">Collaborate</div>
<svg class="a" style="left:1884px;top:5px;" width="10" height="11" viewBox="0 0 10 11"><path d="M2.2 5 V3.2 A2.8 2.8 0 0 1 7.8 3.2" stroke="#c4c4c4" stroke-width="1.2" fill="none"/><rect x="0.8" y="5" width="8.4" height="5.2" rx="0.8" fill="none" stroke="#c4c4c4" stroke-width="1.2"/></svg>
<svg class="a" style="left:1904px;top:5px" width="4" height="12"><use href="#kebab"/></svg>
<svg class="a" style="left:1397px;top:30px;" width="22" height="22" viewBox="0 0 22 22"><path d="M11 1 L20.5 5.8 V16.2 L11 21 L1.5 16.2 V5.8 Z" fill="#83d2f7"/><path d="M2 6.2 L11 10.8 L20 6.2 M11 10.8 V20.8" stroke="#1d3644" stroke-width="1.6" fill="none"/></svg>
<svg class="a" style="left:1415px;top:50px;" width="8" height="5" viewBox="0 0 8 5"><path d="M0 0H8L4 5Z" fill="#c4c4c4"/></svg>
<svg class="a" style="left:1436px;top:31px;" width="14" height="14" viewBox="0 0 14 14"><use href="#chk"/></svg>
<div class="a" style="left:1456px;top:29px;width:393px;height:17px;background:#2a2a2a;border:1px solid #212121;border-radius:3px"></div>
<div class="t" style="left:1459px;top:30.8px;color:#d8d8d8;font-size:12px;font-weight:400;letter-spacing:0.5px;-webkit-text-stroke:0.3px #d8d8d8;">Retro Truster 1 2</div>
<div class="a" style="left:1853px;top:31px;width:14px;height:14px;background:#2a2a2a;border:1px solid #1f1f1f;border-radius:2px"></div>
<div class="t" style="left:1871px;top:30.8px;color:#c4c4c4;font-size:12px;font-weight:400;letter-spacing:0.15px;">Static</div>
<svg class="a" style="left:1906px;top:35px;" width="8" height="5" viewBox="0 0 8 5"><path d="M0 0H8L4 5Z" fill="#c4c4c4"/></svg>
<div class="t" style="left:1433px;top:54.8px;color:#b4b4b4;font-size:12px;font-weight:400;letter-spacing:0.15px;">Tag</div>
<div class="a" style="left:1459px;top:54px;width:207px;height:17px;background:#515151;border:1px solid #303030;border-radius:3px"></div>
<div class="t" style="left:1462px;top:54.8px;color:#d2d2d2;font-size:12px;font-weight:400;letter-spacing:0.15px;">Untagged</div>
<svg class="a" style="left:1652px;top:60px;" width="8" height="5" viewBox="0 0 8 5"><path d="M0 0H8L4 5Z" fill="#c4c4c4"/></svg>
<div class="t" style="left:1681px;top:54.8px;color:#b4b4b4;font-size:12px;font-weight:400;letter-spacing:0.15px;">Layer</div>
<div class="a" style="left:1718px;top:54px;width:196px;height:17px;background:#515151;border:1px solid #303030;border-radius:3px"></div>
<div class="t" style="left:1722px;top:54.8px;color:#d2d2d2;font-size:12px;font-weight:400;letter-spacing:0.15px;">UI</div>
<svg class="a" style="left:1901px;top:60px;" width="8" height="5" viewBox="0 0 8 5"><path d="M0 0H8L4 5Z" fill="#c4c4c4"/></svg>
<div class="a" style="left:1390px;top:79px;width:530px;height:1px;background:#1f1f1f;"></div>
<div class="a" style="left:1390px;top:80px;width:530px;height:20px;background:#3e3e3e;"></div>
<svg class="a" style="left:1396px;top:86.0px;" width="9" height="8" viewBox="0 0 9 8"><path d="M0 0H9L4.5 8Z" fill="#8a8a8a"/></svg>
<svg class="a" style="left:1411px;top:83.0px;" width="14" height="14" viewBox="0 0 14 14"><path d="M1 1L5 5M13 1L9 5M1 13L5 9M13 13L9 9" stroke="#c8c8c8" stroke-width="1.6"/><path d="M1 1H4.5L1 4.5Z M13 1V4.5L9.5 1Z M1 13V9.5L4.5 13Z M13 13H9.5L13 9.5Z" fill="#c8c8c8"/></svg>
<div class="t" style="left:1450px;top:82.8px;color:#d8d8d8;font-size:12px;font-weight:400;letter-spacing:0.65px;-webkit-text-stroke:0.3px #d8d8d8;">Rect Transform</div>
<svg class="a" style="left:1861px;top:84.0px" width="12" height="12"><use href="#help"/></svg>
<svg class="a" style="left:1881px;top:84.0px" width="12" height="12"><use href="#sliders"/></svg>
<svg class="a" style="left:1905px;top:84.0px" width="4" height="12"><use href="#kebab"/></svg>
<div class="t" style="left:1416px;top:108.8px;color:#c4c4c4;font-size:10px;font-weight:400;letter-spacing:0px;">custom</div>
<div class="t" style="left:1386px;top:139px;width:36px;height:16px;color:#c4c4c4;font-size:10px;transform:rotate(-90deg);transform-origin:18px 8px;text-align:center">custom</div>
<div class="a" style="left:1417px;top:129px;width:35px;height:35px;background:#393939;border:1px solid #6a6a6a;box-shadow:0 0 0 1px #2e2e2e"></div>
<div class="a" style="left:1425px;top:138px;width:18px;height:17px;background:transparent;border:1px solid #bdbdbd"></div>
<div class="t" style="left:1607px;top:108.8px;color:#c4c4c4;font-size:12px;font-weight:400;letter-spacing:0.15px;">Left</div>
<div class="t" style="left:1711px;top:108.8px;color:#c4c4c4;font-size:12px;font-weight:400;letter-spacing:0.15px;">Top</div>
<div class="t" style="left:1815px;top:108.8px;color:#c4c4c4;font-size:12px;font-weight:400;letter-spacing:0.15px;">Pos Z</div>
<div class="a" style="left:1606px;top:125px;width:101px;height:18px;background:#2a2a2a;border:1px solid #212121;border-radius:3px"></div>
<div class="t" style="left:1609px;top:126.8px;color:#d2d2d2;font-size:12px;font-weight:400;letter-spacing:0.15px;">0</div>
<div class="a" style="left:1710px;top:125px;width:101px;height:18px;background:#2a2a2a;border:1px solid #212121;border-radius:3px"></div>
<div class="t" style="left:1713px;top:126.8px;color:#d2d2d2;font-size:12px;font-weight:400;letter-spacing:0.15px;">0</div>
<div class="a" style="left:1814px;top:125px;width:101px;height:18px;background:#2a2a2a;border:1px solid #212121;border-radius:3px"></div>
<div class="t" style="left:1817px;top:126.8px;color:#d2d2d2;font-size:12px;font-weight:400;letter-spacing:0.15px;">0</div>
<div class="t" style="left:1607px;top:145.3px;color:#c4c4c4;font-size:12px;font-weight:400;letter-spacing:0.15px;">Right</div>
<div class="t" style="left:1711px;top:145.3px;color:#c4c4c4;font-size:12px;font-weight:400;letter-spacing:0.15px;">Bottom</div>
<div class="a" style="left:1606px;top:161px;width:101px;height:18px;background:#2a2a2a;border:1px solid #212121;border-radius:3px"></div>
<div class="t" style="left:1609px;top:162.8px;color:#d2d2d2;font-size:12px;font-weight:400;letter-spacing:0.15px;">0</div>
<div class="a" style="left:1710px;top:161px;width:101px;height:18px;background:#2a2a2a;border:1px solid #212121;border-radius:3px"></div>
<div class="t" style="left:1713px;top:162.8px;color:#d2d2d2;font-size:12px;font-weight:400;letter-spacing:0.15px;">0</div>
<div class="a" style="left:1864px;top:159px;width:51px;height:19px;background:#383838;border:1px solid #2a2a2a;border-radius:3px"></div>
<div class="a" style="left:1889px;top:160px;width:1px;height:17px;background:#2a2a2a;"></div>
<svg class="a" style="left:1870px;top:163px;" width="12" height="11" viewBox="0 0 12 11"><rect x="1" y="1" width="10" height="9" fill="none" stroke="#9a9a9a" stroke-width="1" stroke-dasharray="2 1.5"/></svg>
<div class="t" style="left:1896px;top:161.8px;color:#9a9a9a;font-size:11px;font-weight:400;letter-spacing:0.15px;">R</div>
<svg class="a" style="left:1397px;top:186px;" width="9" height="8" viewBox="0 0 9 8"><path d="M0 0H9L4.5 8Z" fill="#8a8a8a"/></svg>
<div class="t" style="left:1409px;top:183.3px;color:#c4c4c4;font-size:12px;font-weight:400;letter-spacing:0.15px;">Anchors</div>
<div class="t" style="left:1424px;top:201.3px;color:#c4c4c4;font-size:12px;font-weight:400;letter-spacing:0.15px;">Min</div>
<div class="t" style="left:1607px;top:201.3px;color:#c4c4c4;font-size:12px;font-weight:400;letter-spacing:0px;">X</div>
<div class="a" style="left:1618px;top:199.5px;width:89px;height:18px;background:#2a2a2a;border:1px solid #212121;border-radius:3px"></div>
<div class="t" style="left:1621px;top:201.3px;color:#d2d2d2;font-size:12px;font-weight:400;letter-spacing:0.15px;">0.47</div>
<div class="t" style="left:1711px;top:201.3px;color:#c4c4c4;font-size:12px;font-weight:400;letter-spacing:0px;">Y</div>
<div class="a" style="left:1722px;top:199.5px;width:89px;height:18px;background:#2a2a2a;border:1px solid #212121;border-radius:3px"></div>
<div class="t" style="left:1725px;top:201.3px;color:#d2d2d2;font-size:12px;font-weight:400;letter-spacing:0.15px;">0.61</div>
<div class="t" style="left:1424px;top:221.3px;color:#c4c4c4;font-size:12px;font-weight:400;letter-spacing:0.15px;">Max</div>
<div class="t" style="left:1607px;top:221.3px;color:#c4c4c4;font-size:12px;font-weight:400;letter-spacing:0px;">X</div>
<div class="a" style="left:1618px;top:219.5px;width:89px;height:18px;background:#2a2a2a;border:1px solid #212121;border-radius:3px"></div>
<div class="t" style="left:1621px;top:221.3px;color:#d2d2d2;font-size:12px;font-weight:400;letter-spacing:0.15px;">0.5</div>
<div class="t" style="left:1711px;top:221.3px;color:#c4c4c4;font-size:12px;font-weight:400;letter-spacing:0px;">Y</div>
<div class="a" style="left:1722px;top:219.5px;width:89px;height:18px;background:#2a2a2a;border:1px solid #212121;border-radius:3px"></div>
<div class="t" style="left:1725px;top:221.3px;color:#d2d2d2;font-size:12px;font-weight:400;letter-spacing:0.15px;">0.67</div>
<div class="t" style="left:1409px;top:243.3px;color:#c4c4c4;font-size:12px;font-weight:400;letter-spacing:0.15px;">Pivot</div>
<div class="t" style="left:1607px;top:243.3px;color:#c4c4c4;font-size:12px;font-weight:400;letter-spacing:0px;">X</div>
<div class="a" style="left:1618px;top:241.5px;width:89px;height:18px;background:#2a2a2a;border:1px solid #212121;border-radius:3px"></div>
<div class="t" style="left:1621px;top:243.3px;color:#d2d2d2;font-size:12px;font-weight:400;letter-spacing:0.15px;">0.5</div>
<div class="t" style="left:1711px;top:243.3px;color:#c4c4c4;font-size:12px;font-weight:400;letter-spacing:0px;">Y</div>
<div class="a" style="left:1722px;top:241.5px;width:89px;height:18px;background:#2a2a2a;border:1px solid #212121;border-radius:3px"></div>
<div class="t" style="left:1725px;top:243.3px;color:#d2d2d2;font-size:12px;font-weight:400;letter-spacing:0.15px;">0.5</div>
<div class="t" style="left:1409px;top:271.3px;color:#c4c4c4;font-size:12px;font-weight:400;letter-spacing:0.15px;">Rotation</div>
<div class="t" style="left:1609px;top:271.3px;color:#c4c4c4;font-size:12px;font-weight:400;letter-spacing:0px;">X</div>
<div class="a" style="left:1621px;top:269.5px;width:87px;height:18px;background:#2a2a2a;border:1px solid #212121;border-radius:3px"></div>
<div class="t" style="left:1624px;top:271.3px;color:#d2d2d2;font-size:12px;font-weight:400;letter-spacing:0.15px;">0</div>
<div class="t" style="left:1713px;top:271.3px;color:#c4c4c4;font-size:12px;font-weight:400;letter-spacing:0px;">Y</div>
<div class="a" style="left:1725px;top:269.5px;width:87px;height:18px;background:#2a2a2a;border:1px solid #212121;border-radius:3px"></div>
<div class="t" style="left:1728px;top:271.3px;color:#d2d2d2;font-size:12px;font-weight:400;letter-spacing:0.15px;">0</div>
<div class="t" style="left:1817px;top:271.3px;color:#c4c4c4;font-size:12px;font-weight:400;letter-spacing:0px;">Z</div>
<div class="a" style="left:1828px;top:269.5px;width:87px;height:18px;background:#2a2a2a;border:1px solid #212121;border-radius:3px"></div>
<div class="t" style="left:1831px;top:271.3px;color:#d2d2d2;font-size:12px;font-weight:400;letter-spacing:0.15px;">0</div>
<div class="t" style="left:1409px;top:291.3px;color:#c4c4c4;font-size:12px;font-weight:400;letter-spacing:0.15px;">Scale</div>
<div class="t" style="left:1609px;top:291.3px;color:#c4c4c4;font-size:12px;font-weight:400;letter-spacing:0px;">X</div>
<div class="a" style="left:1621px;top:289.5px;width:87px;height:18px;background:#2a2a2a;border:1px solid #212121;border-radius:3px"></div>
<div class="t" style="left:1624px;top:291.3px;color:#d2d2d2;font-size:12px;font-weight:400;letter-spacing:0.15px;">1</div>
<div class="t" style="left:1713px;top:291.3px;color:#c4c4c4;font-size:12px;font-weight:400;letter-spacing:0px;">Y</div>
<div class="a" style="left:1725px;top:289.5px;width:87px;height:18px;background:#2a2a2a;border:1px solid #212121;border-radius:3px"></div>
<div class="t" style="left:1728px;top:291.3px;color:#d2d2d2;font-size:12px;font-weight:400;letter-spacing:0.15px;">1</div>
<div class="t" style="left:1817px;top:291.3px;color:#c4c4c4;font-size:12px;font-weight:400;letter-spacing:0px;">Z</div>
<div class="a" style="left:1828px;top:289.5px;width:87px;height:18px;background:#2a2a2a;border:1px solid #212121;border-radius:3px"></div>
<div class="t" style="left:1831px;top:291.3px;color:#d2d2d2;font-size:12px;font-weight:400;letter-spacing:0.15px;">1</div>
<div class="a" style="left:1390px;top:316px;width:530px;height:1px;background:#1f1f1f;"></div>
<div class="a" style="left:1390px;top:317px;width:530px;height:21px;background:#3e3e3e;"></div>
<svg class="a" style="left:1397px;top:323.0px;" width="8" height="9" viewBox="0 0 8 9"><path d="M0 0V9L8 4.5Z" fill="#8a8a8a"/></svg>
<svg class="a" style="left:1410px;top:321.5px;" width="17" height="12" viewBox="0 0 17 12"><path d="M1 6Q8.5 -1.5 16 6Q8.5 13.5 1 6Z" fill="none" stroke="#c8c8c8" stroke-width="1.3"/><circle cx="8.5" cy="6" r="2.6" fill="none" stroke="#c8c8c8" stroke-width="1.3"/></svg>
<div class="t" style="left:1450px;top:320.3px;color:#d8d8d8;font-size:12px;font-weight:400;letter-spacing:0.5px;-webkit-text-stroke:0.3px #d8d8d8;">Canvas Renderer</div>
<svg class="a" style="left:1861px;top:321.5px" width="12" height="12"><use href="#help"/></svg>
<svg class="a" style="left:1881px;top:321.5px" width="12" height="12"><use href="#sliders"/></svg>
<svg class="a" style="left:1905px;top:321.5px" width="4" height="12"><use href="#kebab"/></svg>
<div class="a" style="left:1390px;top:338px;width:530px;height:1px;background:#1f1f1f;"></div>
<div class="a" style="left:1390px;top:339px;width:530px;height:21px;background:#3e3e3e;"></div>
<svg class="a" style="left:1397px;top:345.0px;" width="8" height="9" viewBox="0 0 8 9"><path d="M0 0V9L8 4.5Z" fill="#8a8a8a"/></svg>
<svg class="a" style="left:1411px;top:343.0px;" width="14" height="12" viewBox="0 0 14 12"><rect x="1.5" y="1.5" width="11" height="9" fill="none" stroke="#c8c8c8" stroke-width="1.3"/><path d="M3 9L5.5 6L8 8L10 6.5L11 9Z" fill="#c8c8c8"/><circle cx="4.6" cy="4.2" r="1.2" fill="#c8c8c8"/><circle cx="1.5" cy="1.5" r="1.4" fill="#c8c8c8"/><circle cx="12.5" cy="1.5" r="1.4" fill="#c8c8c8"/><circle cx="1.5" cy="10.5" r="1.4" fill="#c8c8c8"/><circle cx="12.5" cy="10.5" r="1.4" fill="#c8c8c8"/></svg>
<svg class="a" style="left:1430px;top:342.5px;" width="14" height="14" viewBox="0 0 14 14"><use href="#chk"/></svg>
<div class="t" style="left:1450px;top:342.3px;color:#d8d8d8;font-size:12px;font-weight:400;letter-spacing:0.5px;-webkit-text-stroke:0.3px #d8d8d8;">Image</div>
<svg class="a" style="left:1861px;top:343.5px" width="12" height="12"><use href="#help"/></svg>
<svg class="a" style="left:1881px;top:343.5px" width="12" height="12"><use href="#sliders"/></svg>
<svg class="a" style="left:1905px;top:343.5px" width="4" height="12"><use href="#kebab"/></svg>
<div class="a" style="left:1390px;top:360px;width:530px;height:1px;background:#1f1f1f;"></div>
<div class="a" style="left:1390px;top:361px;width:530px;height:21px;background:#3e3e3e;"></div>
<svg class="a" style="left:1396px;top:367.5px;" width="9" height="8" viewBox="0 0 9 8"><path d="M0 0H9L4.5 8Z" fill="#8a8a8a"/></svg>
<svg class="a" style="left:1411.5px;top:364.5px" width="12" height="14"><use href="#cs"/></svg>
<div class="t" style="left:1450px;top:364.3px;color:#d8d8d8;font-size:12px;font-weight:400;letter-spacing:0.6px;-webkit-text-stroke:0.3px #d8d8d8;">Ship Status Display Part (Script)</div>
<svg class="a" style="left:1861px;top:365.5px" width="12" height="12"><use href="#help"/></svg>
<svg class="a" style="left:1881px;top:365.5px" width="12" height="12"><use href="#sliders"/></svg>
<svg class="a" style="left:1905px;top:365.5px" width="4" height="12"><use href="#kebab"/></svg>
<div class="t" style="left:1409px;top:388.3px;color:#7f7f7f;font-size:12px;font-weight:400;letter-spacing:0.15px;">Script</div>
<div class="a" style="left:1609px;top:387px;width:307px;height:17px;background:#333333;border:1px solid #2a2a2a;border-radius:3px"></div>
<svg class="a" style="left:1613px;top:389px" width="11" height="13"><use href="#scr"/></svg>
<div class="t" style="left:1626px;top:388.3px;color:#8a8a8a;font-size:12px;font-weight:400;letter-spacing:0.15px;">ShipStatusDisplayPart</div>
<svg class="a" style="left:1899px;top:390px" width="12" height="12"><use href="#target"/></svg>
<div class="t" style="left:1409px;top:408.8px;color:#c4c4c4;font-size:12px;font-weight:400;letter-spacing:0.15px;">Graphic</div>
<div class="a" style="left:1609px;top:407px;width:307px;height:17px;background:#2a2a2a;border:1px solid #212121;border-radius:3px"></div>
<svg class="a" style="left:1613px;top:410px;" width="12" height="11" viewBox="0 0 12 11"><rect x="0.7" y="0.7" width="10.6" height="9.6" fill="none" stroke="#c8c8c8" stroke-width="1.1"/><path d="M2 9L4.5 5.5L6.5 7.5L8 6L10 9Z" fill="#c8c8c8"/></svg>
<div class="t" style="left:1626px;top:408.8px;color:#d2d2d2;font-size:12px;font-weight:400;letter-spacing:0.15px;">Retro Truster 1 2 (Image)</div>
<div class="a" style="left:1895px;top:408px;width:20px;height:15px;background:#2a2a2a;"></div>
<svg class="a" style="left:1899px;top:410px" width="12" height="12"><use href="#target"/></svg>
<svg class="a" style="left:1397px;top:431.5px;" width="9" height="8" viewBox="0 0 9 8"><path d="M0 0H9L4.5 8Z" fill="#8a8a8a"/></svg>
<div class="t" style="left:1410px;top:428.3px;color:#d2d2d2;font-size:12px;font-weight:400;letter-spacing:0.47px;-webkit-text-stroke:0.3px #d2d2d2;">Part Keys</div>
<div class="a" style="left:1868px;top:426px;width:47px;height:18px;background:#2a2a2a;border:1px solid #212121;border-radius:3px"></div>
<div class="t" style="left:1871px;top:427.8px;color:#d2d2d2;font-size:12px;font-weight:400;letter-spacing:0.15px;">2</div>
<div class="a" style="left:1409px;top:448px;width:507px;height:46px;background:#414141;border:1px solid #2a2a2a;border-radius:3px"></div>
<svg class="a" style="left:1414px;top:458.5px;" width="10" height="5" viewBox="0 0 10 5"><path d="M0 0.5H10M0 4.5H10" stroke="#6a6a6a" stroke-width="1"/></svg>
<div class="t" style="left:1438px;top:453.8px;color:#c4c4c4;font-size:12px;font-weight:400;letter-spacing:0.15px;">Element 0</div>
<div class="a" style="left:1613px;top:452px;width:296px;height:17px;background:#2a2a2a;border:1px solid #212121;border-radius:3px"></div>
<div class="t" style="left:1616px;top:453.3px;color:#d2d2d2;font-size:12px;font-weight:400;letter-spacing:0.15px;">retrothruster1</div>
<svg class="a" style="left:1414px;top:478.5px;" width="10" height="5" viewBox="0 0 10 5"><path d="M0 0.5H10M0 4.5H10" stroke="#6a6a6a" stroke-width="1"/></svg>
<div class="t" style="left:1438px;top:473.8px;color:#c4c4c4;font-size:12px;font-weight:400;letter-spacing:0.15px;">Element 1</div>
<div class="a" style="left:1613px;top:472px;width:296px;height:17px;background:#2a2a2a;border:1px solid #212121;border-radius:3px"></div>
<div class="t" style="left:1616px;top:473.3px;color:#d2d2d2;font-size:12px;font-weight:400;letter-spacing:0.15px;">retrothruster2</div>
<div class="a" style="left:1849px;top:493px;width:56px;height:19px;background:#414141;border:1px solid #2a2a2a;border-top:none;border-radius:0 0 3px 3px"></div>
<svg class="a" style="left:1858px;top:496px;" width="11" height="11" viewBox="0 0 11 11"><path d="M5.5 0.5V10.5M0.5 5.5H10.5" stroke="#d0d0d0" stroke-width="1.8"/></svg>
<svg class="a" style="left:1884px;top:501px;" width="10" height="2" viewBox="0 0 10 2"><path d="M0 1H10" stroke="#8a8a8a" stroke-width="1.4"/></svg>
<div class="t" style="left:1409px;top:518.3px;color:#c4c4c4;font-size:12px;font-weight:400;letter-spacing:0.15px;">Tooltip</div>
<div class="a" style="left:1609px;top:516px;width:306px;height:18px;background:#2a2a2a;border:1px solid #212121;border-radius:3px"></div>
<svg class="a" style="left:1612px;top:519px" width="11" height="13"><use href="#cs"/></svg>
<div class="t" style="left:1626px;top:518.3px;color:#d2d2d2;font-size:12px;font-weight:400;letter-spacing:0.15px;">Retro Truster 1 2 (Tooltip Trigger)</div>
<div class="a" style="left:1896px;top:517px;width:1px;height:16px;background:#383838;"></div>
<svg class="a" style="left:1899px;top:519.5px" width="12" height="12"><use href="#target"/></svg>
<div class="a" style="left:1390px;top:539px;width:2px;height:15px;background:#3a8fd8;"></div>
<div class="t" style="left:1409px;top:538.3px;color:#d8d8d8;font-size:12px;font-weight:400;letter-spacing:0.4px;-webkit-text-stroke:0.3px #d8d8d8;">Detail Group</div>
<div class="a" style="left:1609px;top:537px;width:306px;height:18px;background:#2a2a2a;border:1px solid #212121;border-radius:3px"></div>
<svg class="a" style="left:1612px;top:539px" width="11" height="13"><use href="#cs"/></svg>
<div class="t" style="left:1626px;top:538.3px;color:#d8d8d8;font-size:12px;font-weight:400;letter-spacing:0.47px;-webkit-text-stroke:0.3px #d8d8d8;">Retro Thrusters 1 2 (Ship Status Detail Group)</div>
<div class="a" style="left:1896px;top:538px;width:1px;height:16px;background:#383838;"></div>
<svg class="a" style="left:1899px;top:539.5px" width="12" height="12"><use href="#target"/></svg>
<div class="a" style="left:1390px;top:563px;width:530px;height:1px;background:#1f1f1f;"></div>
<div class="a" style="left:1390px;top:564px;width:530px;height:21px;background:#3e3e3e;"></div>
<svg class="a" style="left:1397px;top:570.0px;" width="8" height="9" viewBox="0 0 8 9"><path d="M0 0V9L8 4.5Z" fill="#8a8a8a"/></svg>
<svg class="a" style="left:1411.5px;top:567.5px" width="12" height="14"><use href="#cs"/></svg>
<svg class="a" style="left:1430px;top:567.5px;" width="14" height="14" viewBox="0 0 14 14"><use href="#chk"/></svg>
<div class="t" style="left:1450px;top:567.3px;color:#98b2e8;font-size:12px;font-weight:400;letter-spacing:0.75px;-webkit-text-stroke:0.3px #98b2e8;">Tooltip Trigger (Script)</div>
<svg class="a" style="left:1861px;top:568.5px" width="12" height="12"><use href="#help"/></svg>
<svg class="a" style="left:1881px;top:568.5px" width="12" height="12"><use href="#sliders"/></svg>
<svg class="a" style="left:1905px;top:568.5px" width="4" height="12"><use href="#kebab"/></svg>
<div class="a" style="left:1390px;top:585px;width:530px;height:55px;background:#383838;"></div>
<div class="a" style="left:1406px;top:592px;width:32px;height:32px;background:#000;"></div>
<div class="a" style="left:1410px;top:596px;width:24px;height:24px;background:#fff;"></div>
<div class="t" style="left:1446px;top:590.8px;color:#c4c4c4;font-size:14px;font-weight:400;letter-spacing:0px;">Default UI Material (Material)</div>
<svg class="a" style="left:1890px;top:593px" width="12" height="12"><use href="#help"/></svg>
<svg class="a" style="left:1909px;top:593px" width="4" height="12"><use href="#kebab"/></svg>
<div class="t" style="left:1443px;top:617.3px;color:#8a8a8a;font-size:12px;font-weight:400;letter-spacing:0.15px;">Shader</div>
<div class="a" style="left:1495px;top:616px;width:374px;height:16px;background:#454545;border:1px solid #333;border-radius:3px"></div>
<div class="t" style="left:1498px;top:616.8px;color:#9a9a9a;font-size:12px;font-weight:400;letter-spacing:0.15px;">UI/Default</div>
<svg class="a" style="left:1855px;top:622px;" width="8" height="5" viewBox="0 0 8 5"><path d="M0 0H8L4 5Z" fill="#8a8a8a"/></svg>
<div class="a" style="left:1873px;top:614px;width:42px;height:16px;background:#454545;border:1px solid #333;border-radius:3px"></div>
<div class="t" style="left:1879px;top:614.8px;color:#8a8a8a;font-size:12px;font-weight:400;letter-spacing:0.15px;">Edit...</div>
<svg class="a" style="left:1397px;top:623.5px;" width="8" height="9" viewBox="0 0 8 9"><path d="M0 0V9L8 4.5Z" fill="#7a7a7a"/></svg>
<div class="a" style="left:1390px;top:639px;width:530px;height:1px;background:#2a2a2a;"></div>
<div class="a" style="left:1390px;top:650px;width:530px;height:1px;background:#2a2a2a;"></div>
<div class="a" style="left:1541px;top:659px;width:228px;height:20px;background:#585858;border:1px solid #303030;border-radius:3px"></div>
<div class="t" style="left:1610px;top:662.8px;color:#d2d2d2;font-size:12px;font-weight:400;letter-spacing:0.15px;">Add Component</div>
<svg class="a" style="left:0;top:0" width="1920" height="676" viewBox="0 0 1920 676"><path d="M226.5,117.5 Q233,112.2 252,112.3 L300.0,113.1 L306.0,113.0 L312.0,113.0 L318.0,113.0 L324.0,113.2 L330.0,113.4 L336.0,113.6 L342.0,113.9 L348.0,114.3 L354.0,114.7 L360.0,115.2 L366.0,115.8 L372.0,116.4 L378.0,117.0 L384.0,117.7 L390.0,118.5 L396.0,119.3 L402.0,120.1 L408.0,121.0 L414.0,122.0 L420.0,123.0 L426.0,124.0 L432.0,125.1 L438.0,126.3 L444.0,127.4 L450.0,128.6 L456.0,129.9 L462.0,131.2 L468.0,132.6 L474.0,133.9 L480.0,135.4 L486.0,136.9 L492.0,138.4 L498.0,139.9 L504.0,141.5 L510.0,143.2 L516.0,144.8 L522.0,146.6 L528.0,148.3 L534.0,150.1 L540.0,152.0 L546.0,153.9 L552.0,155.8 L558.0,157.7 L564.0,159.8 L570.0,161.8 L576.0,163.9 L582.0,166.0 L588.0,168.2 L594.0,170.4 L600.0,172.6 L606.0,174.9 L612.0,177.3 L618.0,179.6 L624.0,182.0 L630.0,184.5 L636.0,187.0 L642.0,189.5 L648.0,192.1 L654.0,194.7 L660.0,197.4 L666.0,200.0 L672.0,202.8 L678.0,205.5 L684.0,208.3 L690.0,211.2 L696.0,214.1 L702.0,217.0 L708.0,220.0 L714.0,222.9 L720.0,226.0 L726.0,229.0 L732.0,232.1 L738.0,235.3 L744.0,238.5 L750.0,241.7 L756.0,244.9 L762.0,248.2 L768.0,251.5 L774.0,254.8 L780.0,258.2 L786.0,261.6 L792.0,265.0 L798.0,268.5 L804.0,271.9 L810.0,275.4 L816.0,279.0 L822.0,282.5 L828.0,286.1 L834.0,289.7 L840.0,293.4 L846.0,297.0 L852.0,300.7 L858.0,304.3 L864.0,308.1 L870.0,311.8 L876.0,315.5 L882.0,319.2 L888.0,323.0 L894.0,326.8 L900.0,330.5 L906.0,334.3 L912.0,338.1 L918.0,341.9 L924.0,345.7 L930.0,349.5 L936.0,353.3 L942.0,357.1 L948.0,360.9 L954.0,364.7 L960.0,368.5 L966.0,372.3 L972.0,376.1 L978.0,379.8 L984.0,383.6 L990.0,387.3 L996.0,391.1 L1002.0,394.8 L1008.0,398.5 L1014.0,402.1 L1020.0,405.8 L1026.0,409.4 L1032.0,413.0 L1038.0,416.6 L1044.0,420.1 L1050.0,423.6 L1056.0,427.1 L1062.0,430.6 L1068.0,434.0 L1074.0,437.4 L1080.0,440.7 L1086.0,444.0 L1092.0,447.3 L1098.0,450.5 L1104.0,453.6 L1110.0,456.8 L1116.0,459.8 L1122.0,462.9 L1128.0,465.8 L1134.0,468.8 L1140.0,471.6 L1146.0,474.5 L1152.0,477.2 L1158.0,479.9 L1164.0,482.6 L1170.0,485.2 L1176.0,487.7 L1182.0,490.2 L1188.0,492.6 L1194.0,494.9 L1200.0,497.2 L1206.0,499.4 L1212.0,501.6 L1218.0,503.6 L1224.0,505.7 L1230.0,507.6 L1236.0,509.5 L1242.0,511.3 L1248.0,513.1 L1254.0,514.8 L1260.0,516.4 L1266.0,517.9 L1272.0,519.4 L1278.0,520.8 L1284.0,522.2 L1290.0,523.5 L1296.0,524.7 L1302.0,525.8 L1308.0,526.9 L1314.0,527.9 L1320.0,528.9 L1326.0,529.8 L1332.0,530.7 L1338.0,531.5 L1344.0,532.2 L1350.0,532.9 L1356.0,533.5 L1362.0,534.1 L1368.0,534.7 L1374.0,535.2 L1380.0,535.6 L1386.0,536.1 L1392.0,536.5 L1398.0,536.8 L1399.0,536.9" fill="none" stroke="#e61c1c" stroke-width="5" stroke-linecap="round" stroke-linejoin="round"/><path d="M1377,525.8 Q1390,531 1400,537.3 Q1388,541 1378.8,546.9" fill="none" stroke="#e61c1c" stroke-width="5" stroke-linecap="round" stroke-linejoin="round"/></svg>
</body></html>
